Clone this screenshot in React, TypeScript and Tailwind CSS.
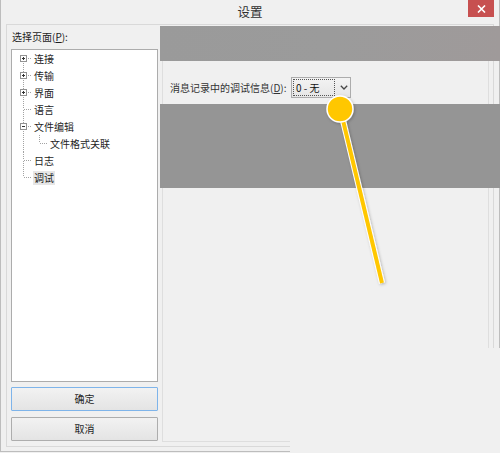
import React from 'react';

type Row = {
  label: string;
  level: 0 | 1;
  box?: '+' | '-';
  first?: boolean;
  last?: boolean;
  selected?: boolean;
};

const rows: Row[] = [
  { label: '连接', level: 0, box: '+', first: true },
  { label: '传输', level: 0, box: '+' },
  { label: '界面', level: 0, box: '+' },
  { label: '语言', level: 0 },
  { label: '文件编辑', level: 0, box: '-' },
  { label: '文件格式关联', level: 1 },
  { label: '日志', level: 0 },
  { label: '调试', level: 0, last: true, selected: true },
];

const dot = { stroke: '#a3a3a3', strokeWidth: 1, strokeDasharray: '1 1' };

// tree connector lines + expand box
function Gutter({ row }: { row: Row }) {
  const w = row.level === 0 ? 21 : 37;
  return (
    <svg width={w} height={17} className="shrink-0" shapeRendering="crispEdges">
      {row.level === 0 ? (
        <>
          {!row.first && <line x1={11.5} y1={0} x2={11.5} y2={8} {...dot} />}
          {!row.last && <line x1={11.5} y1={9} x2={11.5} y2={17} {...dot} />}
          <line x1={12} y1={8.5} x2={20} y2={8.5} {...dot} />
          {row.box === '-' && <line x1={27.5} y1={13} x2={27.5} y2={17} {...dot} />}
          {row.box && (
            <>
              <rect x={8.5} y={5.5} width={6} height={6} fill="#fff" stroke="#929292" strokeWidth={1} />
              <line x1={10} y1={8.5} x2={13} y2={8.5} stroke="#333" strokeWidth={1} />
              {row.box === '+' && <line x1={11.5} y1={7} x2={11.5} y2={10} stroke="#333" strokeWidth={1} />}
            </>
          )}
        </>
      ) : (
        <>
          <line x1={11.5} y1={0} x2={11.5} y2={17} {...dot} />
          <line x1={27.5} y1={0} x2={27.5} y2={8} {...dot} />
          <line x1={28} y1={8.5} x2={36} y2={8.5} {...dot} />
        </>
      )}
    </svg>
  );
}

export default function App() {
  return (
    <div className="relative h-[453px] w-[500px] overflow-hidden bg-[#f0f0f0] font-['Noto_Sans_CJK_SC',sans-serif] text-[10px] leading-none text-[#1e1e1e]">
      <div className="flex h-[452px] flex-col border-x border-b border-[#bdbdbd]">
        {/* title bar */}
        <div className="relative flex h-[24px] shrink-0 items-center justify-center">
          <span className="text-[12.5px] text-[#2e2e2e]">设置</span>
          <div className="absolute right-[5px] top-0 flex h-[17px] w-[26px] items-center justify-center bg-[#c75050]">
            <svg width="9" height="8" viewBox="0 0 9 8">
              <path d="M1 0.5 L8 7.5 M8 0.5 L1 7.5" stroke="#fff" strokeWidth="1.6" />
            </svg>
          </div>
        </div>

        <div className="mx-[5px] mb-[4px] flex flex-1 border border-[#d9d9d9] pl-[4px] pr-[4px]">
          {/* left column */}
          <div className="flex w-[147px] shrink-0 flex-col">
            <div className="flex h-[24px] items-center pl-[1px]">
              选择页面(<span className="underline">P</span>):
            </div>
            <div className="h-[333px] border border-[#acacac] bg-white">
              {rows.map((r) => (
                <div key={r.label} className="flex h-[17px] items-center">
                  <Gutter row={r} />
                  <span className={r.selected ? 'bg-[#e6e6e6] px-[1px] py-[2px]' : 'px-[1px]'}>{r.label}</span>
                </div>
              ))}
            </div>
            <button className="mt-[5px] flex h-[24px] items-center justify-center rounded-[1px] border border-[#7eb4ea] bg-gradient-to-b from-[#f2f2f2] to-[#e4e4e4]">
              确定
            </button>
            <button className="mt-[6px] flex h-[24px] items-center justify-center rounded-[1px] border border-[#adadad] bg-gradient-to-b from-[#f2f2f2] to-[#e4e4e4]">
              取消
            </button>
          </div>

          {/* right panel */}
          <div className="mb-[4px] ml-[4px] mt-[1px] flex-1 border border-[#dedede] pl-[7px] pt-[50px]">
            <div className="flex items-center">
              <span className="w-[121px] shrink-0 whitespace-nowrap text-[#333]">
                消息记录中的调试信息(<span className="underline">D</span>):
              </span>
              <div className="flex h-[21px] w-[60px] items-center border border-[#acacac] bg-gradient-to-b from-[#f3f3f3] to-[#e6e6e6]">
                <div className="ml-[1px] flex h-[17px] w-[42px] items-center border border-dotted border-[#555] pl-[2px] text-[#111]">
                  0 - 无
                </div>
                <svg width="8" height="5" viewBox="0 0 8 5" className="ml-[5px]">
                  <path d="M0.8 0.8 L4 4 L7.2 0.8" fill="none" stroke="#444" strokeWidth="1.3" />
                </svg>
              </div>
            </div>
          </div>
        </div>
      </div>

      {/* redaction bands */}
      <div className="absolute left-[160px] right-0 top-[26px] h-[35px] bg-gradient-to-r from-[#9a9a9a] via-[#9b9b9b] to-[#9f9a9a]" />
      <div className="absolute left-[160px] right-0 top-[104px] h-[84px] bg-[#959595]" />

      {/* cropped-off corner */}
      <div className="absolute bottom-0 left-[290px] right-0 top-[348px] bg-[#f0f0f0]" />

      {/* annotation pin */}
      <svg className="pointer-events-none absolute left-0 top-0" width="500" height="453">
        <defs>
          <filter id="sh" x="-20%" y="-20%" width="140%" height="140%">
            <feDropShadow dx="1" dy="1" stdDeviation="1.5" floodColor="#000" floodOpacity="0.25" />
          </filter>
        </defs>
        <g filter="url(#sh)">
          <line x1="341" y1="112" x2="382" y2="283" stroke="#fff" strokeWidth="6" />
          <line x1="341" y1="112" x2="382" y2="283" stroke="#ffc700" strokeWidth="4" />
          <circle cx="340" cy="109" r="13" fill="#ffc700" stroke="#fff" strokeWidth="1.5" />
        </g>
      </svg>
    </div>
  );
}
